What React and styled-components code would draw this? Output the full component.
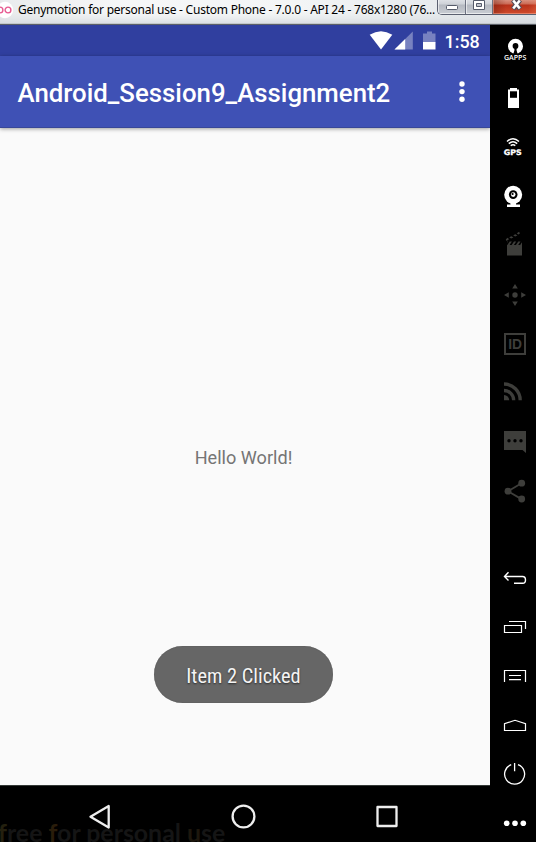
import React from 'react';
import styled, { createGlobalStyle } from 'styled-components';

const GlobalStyle = createGlobalStyle`
  *, *::before, *::after { box-sizing: border-box; }
  html, body { margin: 0; padding: 0; background: #000; overflow: hidden; }
`;

const Window = styled.div`
  width: 536px;
  height: 842px;
  display: flex;
  flex-direction: column;
  overflow: hidden;
  background: #000;
`;

const TitleBar = styled.header`
  height: 25px;
  flex: none;
  display: flex;
  align-items: flex-start;
  background: linear-gradient(90deg, #e9ebed 0, #f6f7f8 130px, #f3f5f6 300px, #dfe3e7 536px);
  box-shadow: inset 0 -1px #5c6068, inset 0 -2px #c3c8cb, inset 0 -9px 8px -4px #d5dade;
`;

const AppBadge = styled.svg`
  width: 18px;
  height: 20px;
  flex: none;
`;

const WindowTitle = styled.span`
  width: 419px;
  flex: none;
  font: 12px/20px 'Noto Sans', 'Open Sans', sans-serif;
  letter-spacing: ${(p) => p.$tracking}px;
  white-space: nowrap;
  color: #000;
`;

const WindowControls = styled.div`
  display: flex;
  height: 15px;
  width: 99px;
  border: 1px solid #5b6070;
  border-top: 0;
  border-right: 0;
  border-radius: 0 0 0 5px;
  overflow: hidden;
`;

const ControlButton = styled.div`
  width: ${(p) => p.$width}px;
  height: 14px;
  flex: none;
  border-left: ${(p) => (p.$first ? '0' : '1px solid #6d7281')};
  background: ${(p) =>
    p.$danger
      ? 'linear-gradient(90deg, rgba(90,20,10,.35), transparent 30%, transparent 80%, rgba(255,140,100,.25)), linear-gradient(#d9907f 0, #cb6a55 4px, #b8311a 5px, #cf4b2c 14px)'
      : 'linear-gradient(#dcdfe4 0, #ced2d8 4px, #b5b9c1 5px, #c9cdd3 14px)'};
  box-shadow: inset 1px -1px ${(p) => (p.$danger ? 'rgba(255,190,170,.45)' : 'rgba(255,255,255,.6)')};

  svg { display: block; }
`;

const Body = styled.div`
  flex: 1;
  display: flex;
  min-height: 0;
`;

const Phone = styled.main`
  width: 490px;
  display: flex;
  flex-direction: column;
  background: #fafafa;
  font-family: Roboto, sans-serif;
`;

const StatusBar = styled.div`
  height: 31px;
  flex: none;
  display: flex;
  background: #303f9f;
  color: #fff;
`;

const StatusIcons = styled.svg`
  width: 75px;
  height: 31px;
  margin-left: 367px;
  flex: none;
`;

const Clock = styled.span`
  margin-left: 2.5px;
  font-size: 17.9px;
  font-weight: 500;
  line-height: 33px;
`;

const AppBar = styled.div`
  height: 72px;
  flex: none;
  display: flex;
  align-items: center;
  justify-content: space-between;
  padding: 3px 20px 0 17.5px;
  background: #3f51b5;
  border-bottom: 1px solid #384798;
  box-shadow: 0 1px 4px rgba(0, 0, 0, 0.38);
  color: #fff;
`;

const AppTitle = styled.h1`
  margin: 0;
  font-size: 25.8px;
  font-weight: 500;
  line-height: 34px;
  white-space: nowrap;
`;

const Overflow = styled.svg`
  width: 16px;
  height: 30px;
`;

const Content = styled.div`
  flex: 1;
  display: flex;
  flex-direction: column;
  align-items: center;
  padding-right: 3px;
`;

const Greeting = styled.p`
  margin: 318px 0 0;
  font-size: 18.1px;
  line-height: 24px;
  color: #757575;
`;

const Toast = styled.div`
  width: 179px;
  height: 57px;
  margin-top: 176px;
  display: flex;
  align-items: center;
  justify-content: center;
  border-radius: 29px;
  background: #666;
  box-shadow: inset 0 0 1px #444;
  color: #f4f4f4;
`;

const ToastText = styled.span`
  font-family: 'Roboto Condensed', Roboto, sans-serif;
  font-size: 20.4px;
  line-height: 24px;
  padding-top: 2px;
  white-space: nowrap;
  text-shadow: 0 1px 2px rgba(0, 0, 0, 0.6);
`;

const NavBar = styled.nav`
  position: relative;
  height: 57px;
  flex: none;
  border-top: 1px solid #343936;
  background: #000;
`;

const NavIcons = styled.svg`
  display: block;
  position: relative;
  width: 490px;
  height: 56px;
`;

const Watermark = styled.div`
  position: absolute;
  left: -2px;
  top: 36px;
  font: 700 24.9px/20px Lato, sans-serif;
  color: #151515;
  white-space: nowrap;
`;

const WatermarkAccent = styled.span`
  color: ${(p) => p.$tone};
`;

const Sidebar = styled.aside`
  width: 46px;
  flex: none;
  display: flex;
  flex-direction: column;
  gap: 38px;
  background: #000;
  overflow: hidden;
`;

const ToolGroup = styled.div`
  display: flex;
  flex-direction: column;
  flex: none;
`;

const Tool = styled.svg`
  width: 46px;
  height: 49px;
  flex: none;
  color: ${(p) => (p.$disabled ? '#3e3e3b' : '#fff')};
`;

const ToolIcon = ({ disabled, children }) => (
  <Tool viewBox="0 0 46 49" $disabled={disabled} fill="currentColor">
    {children}
  </Tool>
);

const Line = ({ d, w = 1.4 }) => (
  <path d={d} fill="none" stroke="currentColor" strokeWidth={w} />
);

const DeviceTools = () => (
  <ToolGroup>
    <ToolIcon>
      <circle cx="25.500" cy="21.300" r="7.500" />
      <circle cx="25.500" cy="21" r="2.900" fill="#000" />
      <path d="M24.400 22h2.200v3.500l1.200 4h-4.600l1.200-4z" fill="#000" />
      <text x="14" y="34.800" fontSize="7" fontFamily="Open Sans, sans-serif" fontWeight="600" textLength="22.300" lengthAdjust="spacingAndGlyphs">GAPPS</text>
    </ToolIcon>
    <ToolIcon>
      <path d="M20 14h7v1.500h2V34H18V15.500h2z" />
      <path d="M20 17.300h7v6.500h-7z" fill="#000" />
    </ToolIcon>
    <ToolIcon>
      <Line d="M17 18.500Q23 13 29 18.500M18.800 20.600Q23 17 27.200 20.600M20.700 22.600Q23 20.800 25.300 22.600" w={1.5} />
      <text x="13.800" y="31.600" fontSize="7.600" fontFamily="DejaVu Sans, sans-serif" fontWeight="700" stroke="currentColor" strokeWidth=".3" textLength="18" lengthAdjust="spacingAndGlyphs">GPS</text>
    </ToolIcon>
    <ToolIcon>
      <circle cx="23.200" cy="22.800" r="9" />
      <circle cx="23.200" cy="22.600" r="4.300" fill="#000" />
      <circle cx="23.200" cy="22.600" r="2.300" />
      <circle cx="22.600" cy="22" r="1.100" fill="#000" />
      <path d="M20.500 31h5.500v1.500h4V35H17v-2.500h3.500z" />
    </ToolIcon>
    <ToolIcon disabled>
      <path d="M17 24h15v10.500H17z" />
      <path d="M17 24.500l2.700-4h2.200l-2.700 4zM21.300 24.500l2.700-4h2.200l-2.700 4zM25.600 24.500l2.700-4h2.200l-2.700 4zM29.800 24.500l2.200-3.300v3.300zM17 20.500h.8l-.8 1.200z" />
      <path d="M15.800 18.200l2-1.400 1.200 1.500-2.500 1.700zM19.200 16.200l2.200-1 2 1.200-2.300 1.100zM23.200 14.300l2.200-1 2 1.200-2.300 1.100zM26.800 12.200l2.300-1.400.8 1.600-1.600 1z" />
    </ToolIcon>
    <ToolIcon disabled>
      <circle cx="25" cy="25" r="2.700" />
      <path d="M25 14l2.800 4.500h-5.600zM25 36l2.800-4.500h-5.600zM14 25l4.800-2.800v5.600zM36 25l-4.800-2.800v5.600z" />
    </ToolIcon>
    <ToolIcon disabled>
      <path d="M15 15h20v20H15z" fill="none" stroke="currentColor" strokeWidth="2" />
      <text x="18.200" y="30.200" fontSize="14.500" fontFamily="Liberation Sans, sans-serif" fontWeight="700" textLength="13.800" lengthAdjust="spacingAndGlyphs">ID</text>
    </ToolIcon>
    <ToolIcon disabled>
      <Line d="M14 16A16.200 16.200 0 0 1 30.200 32.200M14 22.500A9.700 9.700 0 0 1 23.700 32.200" w={3.3} />
      <path d="M14 27a5.200 5.200 0 0 1 5.200 5.200H14z" />
    </ToolIcon>
    <ToolIcon disabled>
      <path d="M14 14h22v22l-3.500-3H14z" />
      <g fill="#000"><circle cx="19" cy="23.800" r="1.700" /><circle cx="25" cy="23.800" r="1.700" /><circle cx="31" cy="23.800" r="1.700" /></g>
    </ToolIcon>
    <ToolIcon disabled>
      <Line d="M31.500 17.200L18 25.200l13.500 7.900" w={1.800} />
      <circle cx="18" cy="25.200" r="3.400" /><circle cx="31.700" cy="17.200" r="3.400" /><circle cx="31.700" cy="33" r="3.400" />
    </ToolIcon>
  </ToolGroup>
);

const SystemTools = () => (
  <ToolGroup>
    <ToolIcon>
      <Line d="M14.500 23.500H32.500Q35.500 23.500 35.500 27T32.500 30.300H24M18.500 19.300L14.500 23.500L18.500 27.500" w={1.400} />
    </ToolIcon>
    <ToolIcon>
      <Line d="M14.500 23.500h17v7h-17zM19 19.500h16.500V27" w={1.200} />
    </ToolIcon>
    <ToolIcon>
      <Line d="M14.500 31V19.500H35.500V31M19 24.500h12M19 28.700h12" w={1.200} />
    </ToolIcon>
    <ToolIcon>
      <Line d="M14.500 30.500v-6.700L25 20.300l10.500 3.500V30.500z" w={1.200} />
    </ToolIcon>
    <ToolIcon>
      <Line d="M21.200 15.700A10 10 0 1 0 28 15.700M24.600 14v8.300" w={1.300} />
    </ToolIcon>
    <ToolIcon>
      <circle cx="16.700" cy="25.200" r="2.800" /><circle cx="25" cy="25.200" r="2.800" /><circle cx="33.300" cy="25.200" r="2.800" />
    </ToolIcon>
  </ToolGroup>
);

export default function App() {
  return (
    <Window>
      <GlobalStyle />
      <TitleBar>
        <AppBadge viewBox="0 0 18 20">
          <circle cx="5" cy="10" r="8.200" fill="#fff" />
          <g fill="none" stroke="#e75a91" strokeWidth="1.400">
            <circle cx="0" cy="10" r="2.900" />
            <circle cx="8" cy="10" r="2.900" />
          </g>
        </AppBadge>
        <WindowTitle $tracking={-0.237}>Genymotion for personal use - Custom Phone - 7.0.0 - API 24 - 768x1280 (76...</WindowTitle>
        <WindowControls>
          <ControlButton $width={27} $first>
            <svg width="26" height="14"><rect x="8.500" y="5.500" width="11" height="4" rx="1" fill="#fff" stroke="#555b6a" /></svg>
          </ControlButton>
          <ControlButton $width={27}>
            <svg width="26" height="14"><path d="M7.500 .5h11v9h-11z" fill="#fff" stroke="#555b6a" /><path d="M10.500 3.500h5v3h-5z" fill="#c5c8d0" stroke="#555b6a" /></svg>
          </ControlButton>
          <ControlButton $width={45} $danger>
            <svg width="44" height="14"><path d="M20 0l7 9M27 0l-7 9" stroke="#544c59" strokeWidth="5" /><path d="M20.200 .5l6.600 8M26.800 .5l-6.600 8" stroke="#fff" strokeWidth="2.600" /></svg>
          </ControlButton>
        </WindowControls>
      </TitleBar>
      <Body>
        <Phone>
          <StatusBar>
            <StatusIcons viewBox="0 0 75 31" fill="#fff">
              <path d="M14 24.500L2.700 9.800Q14 2.500 25.300 9.800z" />
              <path d="M45.800 6.500v18H27.500z" opacity=".35" />
              <path d="M38.200 14v10.500H27.500z" />
              <path d="M60 6.500h5v2h3.500v9H56v-9h4z" opacity=".35" />
              <path d="M56 17h12.500v7.500H56z" />
            </StatusIcons>
            <Clock>1:58</Clock>
          </StatusBar>
          <AppBar>
            <AppTitle>Android_Session9_Assignment2</AppTitle>
            <Overflow viewBox="0 0 16 30" fill="#fff">
              <circle cx="8" cy="6" r="2.700" /><circle cx="8" cy="13.600" r="2.700" /><circle cx="8" cy="21.200" r="2.700" />
            </Overflow>
          </AppBar>
          <Content>
            <Greeting>Hello World!</Greeting>
            <Toast><ToastText>Item 2 Clicked</ToastText></Toast>
          </Content>
          <NavBar>
            <Watermark>
              <WatermarkAccent $tone="#24200f">f</WatermarkAccent>ree <WatermarkAccent $tone="#2a1d0b">f</WatermarkAccent>or personal <WatermarkAccent $tone="#1d170d">u</WatermarkAccent>se
            </Watermark>
            <NavIcons viewBox="0 0 490 56" fill="none" stroke="#eee" strokeWidth="2.300" strokeLinejoin="round">
              <path d="M108.700 20v21.500L90.500 30.700z" />
              <circle cx="243.500" cy="30.500" r="10.900" />
              <path d="M377.500 21h19v19h-19z" />
            </NavIcons>
          </NavBar>
        </Phone>
        <Sidebar>
          <DeviceTools />
          <SystemTools />
        </Sidebar>
      </Body>
    </Window>
  );
}
